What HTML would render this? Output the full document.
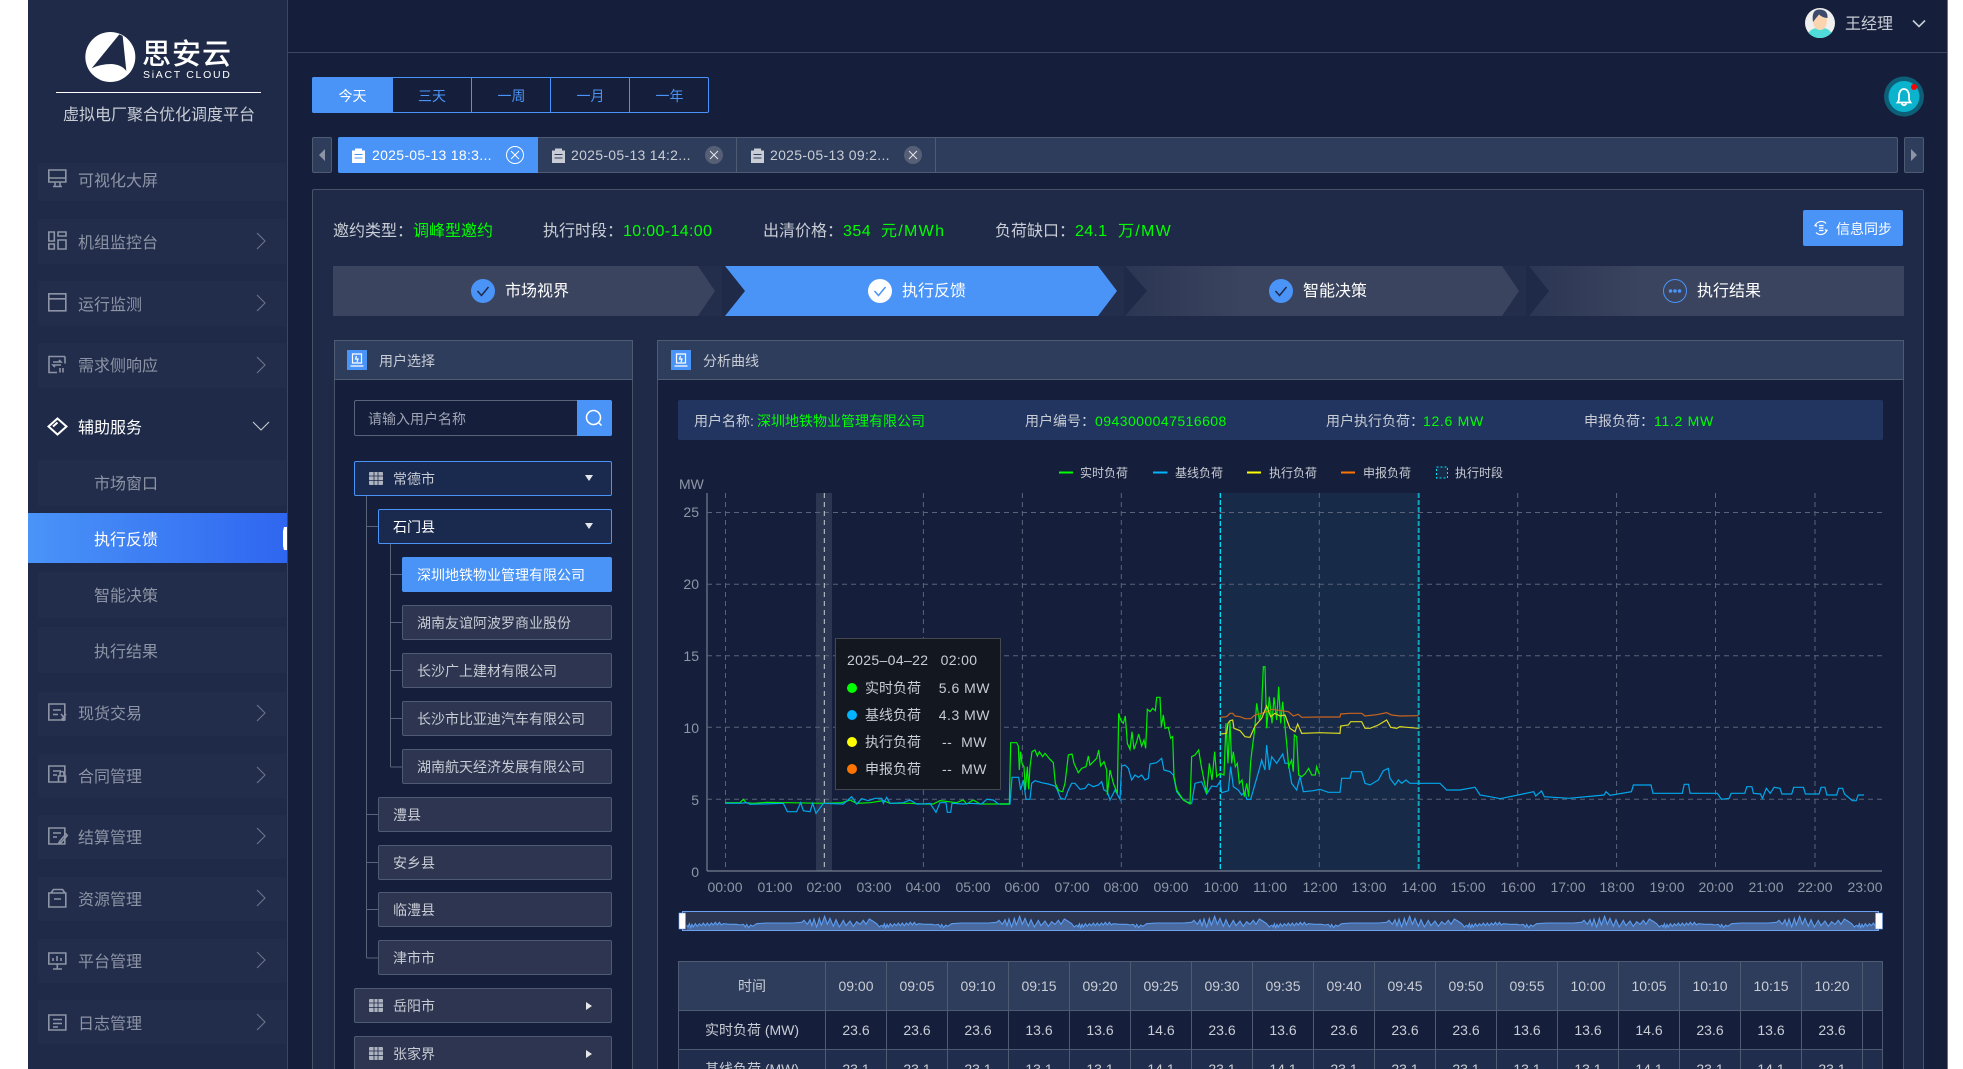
<!DOCTYPE html>
<html lang="zh-CN">
<head>
<meta charset="utf-8">
<title>虚拟电厂聚合优化调度平台</title>
<style>
html,body{margin:0;padding:0;background:#fff;width:1963px;height:1069px;overflow:hidden}
#p{position:relative;width:1963px;height:1069px;overflow:hidden;font-family:"Liberation Sans","Noto Sans CJK SC",sans-serif;font-size:14px;color:#c8ccd4}
.b{position:absolute;box-sizing:border-box}
.t{position:absolute;white-space:nowrap;line-height:20px;height:20px}
.m{font-size:16px;color:#8d94a5;margin-top:2px}
.g{color:#00ff00}
.w{color:#fff}
.mb{position:absolute;left:38px;width:248px;height:45px;background:#222d4b}
.tr{position:absolute;box-sizing:border-box;height:35px;border:1px solid #4f5a73;background:#2d3550;border-radius:2px;line-height:34px;white-space:nowrap;color:#c8ccd4;font-size:14px}
.on{background:#1a2a4f;border-color:#4a94f8}
.tb{position:absolute;top:77px;height:36px;line-height:38px;text-align:center;color:#4a94f8;font-size:14px}
.ax{position:absolute;top:877px;width:50px;margin-left:-25px;text-align:center;line-height:20px;color:#8f96a6;font-size:14px}
.yl{position:absolute;left:670px;width:29px;text-align:right;line-height:20px;color:#8f96a6;font-size:14px}
.lg{position:absolute;top:464px;line-height:18px;font-size:12px;color:#c8ccd4;white-space:nowrap}
table{position:absolute;left:678px;top:961px;border-collapse:collapse;table-layout:fixed;width:1204px;color:#c8ccd4;font-size:14px;text-align:center}
td{border:1px solid #4f5a73;padding:0;white-space:nowrap}
tr.h td{background:#2e3d5c;height:48px}
tr.r1 td{background:#151f3b;height:38px}
tr.r2 td{background:#212d4c;height:38px}
</style>
</head>
<body>
<div id="p">
<!-- Main backgrounds -->
<div class="b" style="left:28px;top:0;width:1920px;height:1069px;background:#151f3b"></div>
<div class="b" style="left:28px;top:0;width:260px;height:1069px;background:#1e2a47;border-right:1px solid #3d4660"></div>
<div class="b" style="left:288px;top:52px;width:1660px;height:1px;background:#3e465f"></div>
<div class="b" style="left:1947px;top:0;width:1px;height:1069px;background:#6c7284"></div>

<!-- Menu boxes -->
<div class="mb" style="top:163px;height:38px"></div>
<div class="mb" style="top:219px"></div>
<div class="mb" style="top:281px"></div>
<div class="mb" style="top:343px"></div>
<div class="mb" style="top:460px;height:46px"></div>
<div class="b" style="left:28px;top:513px;width:259px;height:50px;background:linear-gradient(90deg,#4a94f8,#2f66f0)"></div>
<div class="mb" style="top:572px;height:46px"></div>
<div class="mb" style="top:627px;height:46px"></div>
<div class="mb" style="top:692px;height:44px"></div>
<div class="mb" style="top:754px;height:44px"></div>
<div class="mb" style="top:815px;height:44px"></div>
<div class="mb" style="top:877px;height:44px"></div>
<div class="mb" style="top:939px;height:44px"></div>
<div class="mb" style="top:1000px;height:44px"></div>

<!-- Content panel -->
<div class="b" style="left:312px;top:189px;width:1612px;height:900px;background:#1e2a47;border:1px solid #4a5268;border-radius:2px"></div>
<div class="b" style="left:334px;top:340px;width:299px;height:760px;background:#151f3b;border:1px solid #4a5268"></div>
<div class="b" style="left:334px;top:340px;width:299px;height:40px;background:#2e3d5c;border:1px solid #4f5a73"></div>
<div class="b" style="left:657px;top:340px;width:1247px;height:760px;background:#151f3b;border:1px solid #4a5268"></div>
<div class="b" style="left:657px;top:340px;width:1247px;height:40px;background:#2e3d5c;border:1px solid #4f5a73"></div>
<div class="b" style="left:678px;top:400px;width:1205px;height:40px;background:#213560;border-radius:2px"></div>

<!-- Time tabs -->
<div class="b" style="left:312px;top:77px;width:397px;height:36px;border:1px solid #4a94f8;border-radius:2px"></div>
<div class="tb" style="left:312px;width:81px;background:#4a94f8;color:#fff;border-radius:2px 0 0 2px">今天</div>
<div class="tb" style="left:393px;width:78px">三天</div>
<div class="tb" style="left:471px;width:79px;border-left:1px solid #4a94f8">一周</div>
<div class="tb" style="left:550px;width:79px;border-left:1px solid #4a94f8">一月</div>
<div class="tb" style="left:629px;width:79px;border-left:1px solid #4a94f8">一年</div>

<!-- Tabs bar -->
<div class="b" style="left:312px;top:137px;width:20px;height:36px;background:#2e3d5c;border:1px solid #4f5a73;border-radius:2px"></div>
<div class="b" style="left:338px;top:137px;width:1560px;height:36px;background:#2e3d5c;border:1px solid #4f5a73;border-radius:2px"></div>
<div class="b" style="left:338px;top:137px;width:200px;height:36px;background:#4a94f8;border-radius:2px 0 0 2px"></div>
<div class="b" style="left:736px;top:137px;width:1px;height:36px;background:#4f5a73"></div>
<div class="b" style="left:935px;top:137px;width:1px;height:36px;background:#4f5a73"></div>
<div class="b" style="left:1904px;top:137px;width:20px;height:36px;background:#2e3d5c;border:1px solid #4f5a73;border-radius:2px"></div>

<!-- Buttons -->
<div class="b" style="left:1803px;top:210px;width:100px;height:36px;background:#4a94f8;border-radius:2px"></div>

<!-- Tree -->
<div class="b" style="left:354px;top:400px;width:258px;height:36px;background:#151f3b;border:1px solid #5a6379;border-radius:2px"></div>
<div class="b" style="left:577px;top:400px;width:35px;height:36px;background:#4a94f8;border-radius:0 2px 2px 0"></div>

<div class="tr on" style="left:354px;top:461px;width:258px;padding-left:38px">常德市</div>
<div class="tr on" style="left:378px;top:509px;width:234px;padding-left:14px;color:#fff">石门县</div>
<div class="tr" style="left:402px;top:557px;width:210px;padding-left:14px;background:#4a94f8;border-color:#4a94f8;color:#fff">深圳地铁物业管理有限公司</div>
<div class="tr" style="left:402px;top:605px;width:210px;padding-left:14px">湖南友谊阿波罗商业股份</div>
<div class="tr" style="left:402px;top:653px;width:210px;padding-left:14px">长沙广上建材有限公司</div>
<div class="tr" style="left:402px;top:701px;width:210px;padding-left:14px">长沙市比亚迪汽车有限公司</div>
<div class="tr" style="left:402px;top:749px;width:210px;padding-left:14px">湖南航天经济发展有限公司</div>
<div class="tr" style="left:378px;top:797px;width:234px;padding-left:14px">澧县</div>
<div class="tr" style="left:378px;top:845px;width:234px;padding-left:14px">安乡县</div>
<div class="tr" style="left:378px;top:892px;width:234px;padding-left:14px">临澧县</div>
<div class="tr" style="left:378px;top:940px;width:234px;padding-left:14px">津市市</div>
<div class="tr" style="left:354px;top:988px;width:258px;padding-left:38px">岳阳市</div>
<div class="tr" style="left:354px;top:1036px;width:258px;padding-left:38px">张家界</div>

<!-- All vector graphics -->
<svg class="b" style="left:0;top:0" width="1963" height="1069" viewBox="0 0 1963 1069" fill="none">
<defs>
<linearGradient id="sg" x1="0" x2="1" y1="0" y2="0"><stop offset="0" stop-color="#2b3654"/><stop offset=".3" stop-color="#3a445e"/><stop offset="1" stop-color="#3a445e"/></linearGradient>
<clipPath id="mc"><rect x="683" y="911" width="1195" height="20"/></clipPath>
<g id="wv" transform="translate(680,905) scale(.33333)">
<polygon fill="#4a6a9f" points="20,76 20,60 24,66 28,56 32,68 36,58 40,66 46,56 52,64 58,56 64,62 70,54 76,62 82,54 88,62 94,54 100,60 106,52 112,60 118,52 124,60 130,56 150,58 170,58 180,60 190,58 196,66 200,58 206,68 212,60 218,64 230,56 260,54 300,54 340,54 365,52 372,46 382,58 390,44 396,62 402,42 410,66 418,40 424,60 434,34 442,58 450,40 460,64 468,44 478,66 490,46 498,62 510,48 520,64 530,50 540,58 550,46 558,58 568,42 578,48 590,56 598,66 605,60 605,76"/>
<polyline stroke="#5b9cf0" stroke-width="1.100" vector-effect="non-scaling-stroke" points="20,60 24,66 28,56 32,68 36,58 40,66 46,56 52,64 58,56 64,62 70,54 76,62 82,54 88,62 94,54 100,60 106,52 112,60 118,52 124,60 130,56 150,58 170,58 180,60 190,58 196,66 200,58 206,68 212,60 218,64 230,56 260,54 300,54 340,54 365,52 372,46 382,58 390,44 396,62 402,42 410,66 418,40 424,60 434,34 442,58 450,40 460,64 468,44 478,66 490,46 498,62 510,48 520,64 530,50 540,58 550,46 558,58 568,42 578,48 590,56 598,66 605,60"/>
</g>
</defs>

<!-- Logo -->
<g transform="scale(.33333)">
<circle cx="331" cy="171" r="75" fill="#fff"/>
<path d="M358 103L275 205Q300 192 335 192Q365 194 379 213L368 108Z" fill="#1e2a47"/>
</g>
<rect x="56" y="92" width="205" height="1" fill="#fff"/>

<!-- Sidebar icons -->
<g stroke="#8d94a5" stroke-width="1.600">
<path d="M48.800 170h17v12h-17zM48.800 178h17M53 186.500h9M55 182v4.500M60 182v4.500"/>
<path d="M48.800 232h5.500v9h-5.500zM48.800 244h5.500v5h-5.500zM58 232h8v4h-8zM58 240h8v9h-8z"/>
<path d="M48.800 293.800h17v17h-17zM48.800 298.800h17"/>
<path d="M65 356.500H49v16h8M65 356.500v7M53 362h8l-2-2M61 365h-8l2 2M60 368v4.500M63 368v4.500"/>
<path d="M48.800 704h16v16h-16zM53 710h8M53 714.500h5M61 714l2.500 3 2.500-3M63.500 717v4M61.500 718.500h4"/>
<path d="M48.800 766h16v16h-16zM53 771h8M53 775h4M58.500 776h7v6h-7zM60 776v-2.500a2 2 0 0 1 4 0V776"/>
<path d="M48.800 828h16v16h-16zM53 833h8M53 837h4M66 834l-6 7-1.500 2.500 2.800-1 6-7z"/>
<path d="M48.800 893h17v14h-17zM51 893l2.500-3.500h9l2.500 3.500M54 899h7"/>
<path d="M48.800 953h17v11h-17zM57.300 964v5M53 969h9M53 961v-3M57 961v-5M61 961v-3"/>
<path d="M48.800 1015h17v15h-17zM53 1019.500h9M53 1023.500h9M53 1027h5"/>
</g>
<path d="M57.500 418.500L66.500 426.500L57.500 434.500L48.500 426.500zM53 426.500L57.500 422.500" stroke="#fff" stroke-width="2"/>

<!-- Chevrons -->
<g stroke="#6c748a" stroke-width="1.100">
<path d="M257 233l8 8-8 8M257 295l8 8-8 8M257 357l8 8-8 8M257 705l8 8-8 8M257 767l8 8-8 8M257 828l8 8-8 8M257 890l8 8-8 8M257 952l8 8-8 8M257 1014l8 8-8 8"/>
</g>
<path d="M253 422l8 8 8-8" stroke="#c8ccd4" stroke-width="1.100"/>
<path d="M287 527h-3l-1 4v15l1 4h3z" fill="#fff"/>

<!-- Avatar / user -->
<circle cx="1820" cy="23" r="15" fill="#efefef"/>
<path d="M1808.500 33Q1811 28.500 1817 28h6Q1829 28.500 1831.500 33Q1826 38 1820 38Q1813 38 1808.500 33Z" fill="#4fdcd8"/>
<ellipse cx="1820" cy="21" rx="7" ry="9" fill="#fbd5b0"/>
<path d="M1813 22Q1811 9 1820 9.500Q1828 10 1827.500 18Q1823 18 1819 14.500Q1816 18 1813 22Z" fill="#3d4a6b"/>
<path d="M1913 20.500l6 6 6-6" stroke="#c8ccd4" stroke-width="1.600"/>

<!-- Bell -->
<circle cx="1904" cy="96.500" r="20" fill="#0d5f78"/>
<circle cx="1904" cy="96.500" r="15.500" fill="#0bb3cd"/>
<path d="M1897.500 102.500c1.500-2 1.500-3 1.500-6.500 0-4 2-7 5-7s5 3 5 7c0 3.500 0 4.500 1.500 6.500zM1901.500 103.500q2.500 3.500 5 0" stroke="#fff" stroke-width="1.800"/>
<circle cx="1914" cy="87" r="3" fill="#ff0000"/>

<!-- Tabs bar arrows / icons -->
<path d="M325 149v12l-6-6zM1911 149v12l6-6z" fill="#8d94a5"/>
<g>
<path d="M352 150.500h13v12.500h-13zM355 148.500h7v3h-7z" fill="#fff"/>
<path d="M354.500 154.500h8M354.500 158h8" stroke="#4a94f8"/>
<path d="M552 150.500h13v12.500h-13zM555 148.500h7v3h-7z" fill="#c8ccd4"/>
<path d="M554.500 154.500h8M554.500 158h8" stroke="#2e3d5c"/>
<path d="M751 150.500h13v12.500h-13zM754 148.500h7v3h-7z" fill="#c8ccd4"/>
<path d="M753.500 154.500h8M753.500 158h8" stroke="#2e3d5c"/>
</g>
<circle cx="515" cy="155" r="8.500" stroke="#fff"/>
<path d="M511 151l8 8M519 151l-8 8" stroke="#fff"/>
<circle cx="714" cy="155" r="9" fill="#565f75"/>
<path d="M710 151l8 8M718 151l-8 8" stroke="#e4e6ea"/>
<circle cx="913" cy="155" r="9" fill="#565f75"/>
<path d="M909 151l8 8M917 151l-8 8" stroke="#e4e6ea"/>

<!-- Sync icon -->
<path d="M1815.500 225a6.500 6.500 0 0 1 10.500-1.500M1826.500 231a6.500 6.500 0 0 1-10.500 1.500M1819 225.500h4.500M1819 228h4.500M1819 230.500h4.500" stroke="#fff" stroke-width="1.200"/>
<path d="M1814 226l3.500 1-1.800-3.500zM1828 230l-3.500-1 1.800 3.500z" fill="#fff"/>

<!-- Steps -->
<rect x="696" y="266" width="26" height="50" fill="#232e4d"/>
<rect x="1098" y="266" width="26" height="50" fill="#232e4d"/>
<rect x="1500" y="266" width="26" height="50" fill="#232e4d"/>
<polygon points="333,266 698,266 715,291 698,316 333,316" fill="#3a445e"/>
<polygon points="725,266 1098,266 1117,291 1098,316 725,316 745,291" fill="#4a94f8"/>
<polygon points="1125,266 1502,266 1519,291 1502,316 1125,316 1147,291" fill="url(#sg)"/>
<polygon points="1529,266 1904,266 1904,316 1529,316 1549,291" fill="url(#sg)"/>
<circle cx="483" cy="291" r="12" fill="#4a94f8"/>
<path d="M477.500 291l4 4.500 7-8.500" stroke="#1e2a47" stroke-width="1.500"/>
<circle cx="880" cy="291" r="12" fill="#fff"/>
<path d="M874.500 291l4 4.500 7-8.500" stroke="#4a94f8" stroke-width="1.500"/>
<circle cx="1281" cy="291" r="12" fill="#4a94f8"/>
<path d="M1275.500 291l4 4.500 7-8.500" stroke="#1e2a47" stroke-width="1.500"/>
<circle cx="1675" cy="291" r="11.500" stroke="#4a94f8"/>
<circle cx="1670.500" cy="291" r="1.800" fill="#4a94f8"/><circle cx="1675" cy="291" r="1.800" fill="#4a94f8"/><circle cx="1679.500" cy="291" r="1.800" fill="#4a94f8"/>

<!-- Panel head icons -->
<rect x="347" y="350" width="20" height="20" fill="#4a94f8"/>
<path d="M352.500 354h9v9h-9zM350.500 366h13M356.500 356l-1 3h2.500l-1 3" stroke="#fff" stroke-width="1.200"/>
<rect x="671" y="350" width="20" height="20" fill="#4a94f8"/>
<path d="M676.500 354h9v9h-9zM674.500 366h13M680.500 356l-1 3h2.500l-1 3" stroke="#fff" stroke-width="1.200"/>

<!-- Search -->
<circle cx="593.500" cy="417.500" r="7" stroke="#fff" stroke-width="1.500"/>
<path d="M598.500 422.500l3 3" stroke="#fff" stroke-width="1.500"/>

<!-- Tree connectors -->
<path d="M366.500 496V958M366.500 526.500H378M366.500 814.500H378M366.500 862.500H378M366.500 909.500H378M366.500 958H378M390.500 544V767M390.500 574.500H402M390.500 622.500H402M390.500 670.500H402M390.500 718.500H402M390.500 767H402" stroke="#5a6379"/>
<!-- Tree carets -->
<path d="M585 475h8l-4 6zM585 523h8l-4 6z" fill="#e4e6ea"/>
<path d="M586 1002v8l6-4zM586 1050v8l6-4z" fill="#e4e6ea"/>
<!-- Tree icons -->
<g fill="#aeb3c0">
<rect x="369" y="472" width="14" height="13" rx="1"/><rect x="369" y="999" width="14" height="13" rx="1"/><rect x="369" y="1047" width="14" height="13" rx="1"/>
</g>
<path d="M369 476h14M369 480.500h14M374 472v13M378 472v13M369 1003h14M369 1007.500h14M374 999v13M378 999v13M369 1051h14M369 1055.500h14M374 1047v13M378 1047v13" stroke="#1e2a47" stroke-width=".8"/>

<!-- Chart -->
<rect x="1220.300" y="493" width="198.400" height="378" fill="#172b48"/>
<rect x="816" y="493" width="16" height="378" fill="#2c3650"/>
<g stroke="#5a6379" stroke-dasharray="5 4">
<path d="M707 512.500H1882M707 584.300H1882M707 655.700H1882M707 727.300H1882M707 799.300H1882"/>
<path d="M725.500 493V871M923.400 493V871M1022.400 493V871M1121.300 493V871M1319.300 493V871M1517.700 493V871M1616.600 493V871M1715.500 493V871M1815 493V871"/>
</g>
<path d="M824.300 493V871" stroke="#c8ccd4" stroke-dasharray="5 4"/>
<path d="M1220.300 493V871" stroke="#00e5ff" stroke-width="1.300" stroke-dasharray="5 2"/>
<path d="M1418.700 493V871" stroke="#0aa5b8" stroke-width="2" stroke-dasharray="5 2"/>
<path d="M707 493V871" stroke="#5e667c" stroke-width="1.600"/>
<path d="M707 871H1882" stroke="#8f96a6"/>

<g transform="translate(710,780) scale(.33333)" fill="none">
<polyline stroke="#00ee00" stroke-width="1.200" vector-effect="non-scaling-stroke" points="45,68 90,68 100,58 108,68 130,70 170,67 340,70 395,68 420,60 440,70 480,68 520,62 540,70 600,70 640,72 670,72 690,62 740,68 760,60 770,72 790,60 810,72 850,72 895,72"/>
<polyline stroke="#00a7ec" stroke-width="1.200" vector-effect="non-scaling-stroke" points="45,70 90,70 110,68 120,73 220,70 232,95 260,95 272,68 280,92 300,95 308,70 318,100 340,70 400,72 425,50 440,72 455,56 475,62 495,55 515,55 520,70 530,52 540,70 580,68 600,60 620,72 640,72 660,70 678,97 690,68 708,68 712,97 722,97 726,70 760,72 780,70 815,72 830,58 850,60 865,72 900,72"/>
</g>
<g transform="translate(1000,620) scale(.33333)" fill="none">
<polyline stroke="#00a7ec" stroke-width="1.200" vector-effect="non-scaling-stroke" points="0,552 30,552 36,472 56,472 62,510 70,480 78,538 90,538 95,490 105,482 125,488 145,492 165,498 172,510 182,535 195,538 205,510 215,490 225,490 240,508 255,505 265,492 280,500 295,495 305,485 312,510 322,515 330,540 345,510 360,538 365,438 375,435 385,445 395,480 405,465 415,472 425,465 435,480 445,475 450,432 470,428 485,415 492,450 510,455 520,465 530,515 545,535 560,545 575,550 585,490 605,485 620,522 635,498 650,500 660,485 665,518 685,512 692,440 700,500 715,510 725,525 735,515 740,538 752,538 760,510 770,475 780,440 785,420 795,450 800,375 808,450 815,410 830,430 848,402 855,430 865,430 875,490 890,510 900,470 910,515 940,512 960,508 985,517 1020,517 1025,475 1050,475 1055,455 1085,455 1095,490 1110,495 1135,480 1150,452 1165,445 1170,475 1185,495 1195,480 1205,490 1218,480 1230,490 1275,490 1320,490 1340,510 1380,510 1425,502 1440,525 1480,532 1500,536"/>
<polyline stroke="#00ee00" stroke-width="1.200" vector-effect="non-scaling-stroke" points="0,552 28,552 32,368 50,368 55,378 58,450 62,395 66,430 72,440 76,510 82,440 86,508 90,440 96,395 105,390 112,408 118,395 128,410 135,400 150,418 160,428 166,490 176,512 188,515 195,490 205,405 216,402 222,430 235,458 245,445 258,440 265,408 270,435 280,425 290,415 296,390 302,438 312,425 320,450 322,525 330,450 340,490 352,520 356,280 362,300 370,310 376,288 382,370 390,388 396,335 402,388 410,365 416,342 425,378 432,360 437,385 442,268 450,275 458,265 466,272 470,232 480,232 484,320 490,285 495,325 505,322 512,355 518,350 522,470 530,510 540,525 550,540 570,552 575,410 585,405 596,390 604,440 612,480 620,520 628,430 636,480 644,395 650,470 660,460 672,465 678,310 684,430 690,305 695,430 700,395 706,440 712,430 718,490 726,480 733,530 740,490 746,530 752,425 758,375 764,330 770,250 778,300 784,280 790,140 795,140 800,325 808,230 816,310 822,232 830,300 836,200 842,310 848,245 855,320 860,370 866,440 875,420 880,455 883,345 890,350 896,465 905,470 915,462 926,445 935,465 946,465 950,440 958,462"/>
<polyline stroke="#c8641e" stroke-width="1.200" vector-effect="non-scaling-stroke" points="661,292 680,290 690,280 698,280 705,288 720,290 735,296 752,296 765,285 785,280 800,275 815,268 845,272 865,275 880,288 895,283 905,292 960,291 1020,291 1022,282 1050,280 1085,280 1095,288 1130,284 1160,278 1175,285 1200,288 1256,287"/>
<polyline stroke="#d8d820" stroke-width="1.200" vector-effect="non-scaling-stroke" points="661,342 680,340 684,310 690,302 698,300 702,325 720,332 735,350 750,352 765,318 785,295 800,258 812,290 825,280 840,288 855,285 870,325 885,335 893,312 905,340 960,338 1020,340 1022,318 1045,315 1052,305 1085,305 1095,325 1110,325 1135,315 1160,300 1172,322 1190,325 1200,320 1220,322 1256,325"/>
</g>
<g transform="translate(1350,780) scale(.3909,.33333)" fill="none">
<polyline stroke="#00a7ec" stroke-width="1.200" vector-effect="non-scaling-stroke" points="384,56 430,45 470,35 475,48 490,33 497,50 560,55 650,45 655,35 665,46 720,35 725,15 770,15 775,40 850,40 855,13 866,13 870,40 940,40 950,58 970,55 975,40 1010,40 1015,20 1028,20 1032,40 1050,42 1055,55 1065,25 1075,40 1085,22 1100,25 1105,42 1130,42 1135,22 1160,22 1165,42 1200,42 1205,22 1215,22 1220,45 1245,45 1250,25 1260,25 1265,42 1285,62 1295,62 1300,45 1315,45"/>
</g>

<!-- Legend -->
<g stroke-width="2">
<path d="M1059 472.500h14" stroke="#00ff00"/>
<path d="M1153 472.500h14.500" stroke="#00b4ff"/>
<path d="M1247 472.500h14" stroke="#ffff00"/>
<path d="M1341 472.500h14" stroke="#ff7300"/>
</g>
<rect x="1436.500" y="467" width="11" height="11" fill="#172b48" stroke="#00e5ff" stroke-dasharray="2 2"/>

<!-- Minimap -->
<rect x="682.500" y="911.500" width="1196" height="19" fill="#2c3650"/>
<g clip-path="url(#mc)">
<use href="#wv"/><use href="#wv" x="195"/><use href="#wv" x="390"/><use href="#wv" x="585"/><use href="#wv" x="780"/><use href="#wv" x="975"/><use href="#wv" x="1170"/>
</g>
<rect x="682.500" y="911.500" width="1196" height="19" stroke="#6ea0f0"/>
<rect x="679" y="913" width="6.500" height="16" fill="#fff" stroke="#6ea0f0" stroke-width=".6"/>
<rect x="1875.500" y="913" width="7" height="16" fill="#fff" stroke="#6ea0f0" stroke-width=".6"/>
</svg>

<!-- Sidebar text -->
<div class="t w" style="left:142px;top:39px;font-size:29px;line-height:32px;height:32px;letter-spacing:1px;font-weight:500">思安云</div>
<div class="t w" style="left:143px;top:70px;font-size:10.500px;line-height:11px;height:11px;letter-spacing:1.700px">SiACT CLOUD</div>
<div class="t" style="left:63px;top:106px;font-size:16px">虚拟电厂聚合优化调度平台</div>
<div class="t m" style="left:78px;top:170px">可视化大屏</div>
<div class="t m" style="left:78px;top:232px">机组监控台</div>
<div class="t m" style="left:78px;top:294px">运行监测</div>
<div class="t m" style="left:78px;top:355px">需求侧响应</div>
<div class="t m w" style="left:78px;top:417px;color:#fff">辅助服务</div>
<div class="t m" style="left:94px;top:473px">市场窗口</div>
<div class="t m" style="left:94px;top:529px;color:#fff">执行反馈</div>
<div class="t m" style="left:94px;top:585px">智能决策</div>
<div class="t m" style="left:94px;top:641px">执行结果</div>
<div class="t m" style="left:78px;top:703px">现货交易</div>
<div class="t m" style="left:78px;top:766px">合同管理</div>
<div class="t m" style="left:78px;top:827px">结算管理</div>
<div class="t m" style="left:78px;top:889px">资源管理</div>
<div class="t m" style="left:78px;top:951px">平台管理</div>
<div class="t m" style="left:78px;top:1013px">日志管理</div>

<!-- Header -->
<div class="t" style="left:1845px;top:15px;font-size:16px">王经理</div>

<!-- Tabs text -->
<div class="t w" style="left:372px;top:145px;letter-spacing:.3px">2025-05-13 18:3...</div>
<div class="t" style="left:571px;top:145px;letter-spacing:.3px">2025-05-13 14:2...</div>
<div class="t" style="left:770px;top:145px;letter-spacing:.3px">2025-05-13 09:2...</div>
<div class="t w" style="left:1836px;top:219px">信息同步</div>

<!-- Info row -->
<div class="t" style="left:333px;top:222px;font-size:16px">邀约类型：</div>
<div class="t g" style="left:413px;top:222px;font-size:16px">调峰型邀约</div>
<div class="t" style="left:543px;top:222px;font-size:16px">执行时段：</div>
<div class="t g" style="left:623px;top:222px;font-size:16px;letter-spacing:.35px">10:00-14:00</div>
<div class="t" style="left:763px;top:222px;font-size:16px">出清价格：</div>
<div class="t g" style="left:843px;top:222px;font-size:16px;letter-spacing:.5px">354</div>
<div class="t g" style="left:881px;top:222px;font-size:16px;letter-spacing:1.300px">元/MWh</div>
<div class="t" style="left:995px;top:222px;font-size:16px">负荷缺口：</div>
<div class="t g" style="left:1075px;top:222px;font-size:16px;letter-spacing:.3px">24.1</div>
<div class="t g" style="left:1118px;top:222px;font-size:16px;letter-spacing:1.300px">万/MW</div>

<!-- Steps text -->
<div class="t w" style="left:505px;top:282px;font-size:16px">市场视界</div>
<div class="t w" style="left:902px;top:282px;font-size:16px">执行反馈</div>
<div class="t w" style="left:1303px;top:282px;font-size:16px">智能决策</div>
<div class="t w" style="left:1697px;top:282px;font-size:16px">执行结果</div>

<!-- Panels heads -->
<div class="t" style="left:379px;top:351px">用户选择</div>
<div class="t" style="left:703px;top:351px">分析曲线</div>
<div class="t" style="left:368px;top:409px;color:#9ea4b3">请输入用户名称</div>

<!-- User info bar -->
<div class="t" style="left:694px;top:411px">用户名称:</div>
<div class="t g" style="left:757px;top:411px">深圳地铁物业管理有限公司</div>
<div class="t" style="left:1025px;top:411px">用户编号：</div>
<div class="t g" style="left:1095px;top:411px;letter-spacing:.45px">0943000047516608</div>
<div class="t" style="left:1326px;top:411px">用户执行负荷：</div>
<div class="t g" style="left:1423px;top:411px;letter-spacing:.7px">12.6 MW</div>
<div class="t" style="left:1584px;top:411px">申报负荷：</div>
<div class="t g" style="left:1654px;top:411px;letter-spacing:.7px">11.2 MW</div>

<!-- Legend text -->
<div class="lg" style="left:1080px">实时负荷</div>
<div class="lg" style="left:1175px">基线负荷</div>
<div class="lg" style="left:1269px">执行负荷</div>
<div class="lg" style="left:1363px">申报负荷</div>
<div class="lg" style="left:1455px">执行时段</div>

<!-- Y labels -->
<div class="t" style="left:679px;top:474px;color:#8f96a6">MW</div>
<div class="yl" style="top:502px">25</div>
<div class="yl" style="top:574px">20</div>
<div class="yl" style="top:646px">15</div>
<div class="yl" style="top:718px">10</div>
<div class="yl" style="top:790px">5</div>
<div class="yl" style="top:862px">0</div>

<!-- X labels -->
<div class="ax" style="left:725px">00:00</div><div class="ax" style="left:775px">01:00</div><div class="ax" style="left:824px">02:00</div><div class="ax" style="left:874px">03:00</div><div class="ax" style="left:923px">04:00</div><div class="ax" style="left:973px">05:00</div><div class="ax" style="left:1022px">06:00</div><div class="ax" style="left:1072px">07:00</div><div class="ax" style="left:1121px">08:00</div><div class="ax" style="left:1171px">09:00</div><div class="ax" style="left:1221px">10:00</div><div class="ax" style="left:1270px">11:00</div><div class="ax" style="left:1320px">12:00</div><div class="ax" style="left:1369px">13:00</div><div class="ax" style="left:1419px">14:00</div><div class="ax" style="left:1468px">15:00</div><div class="ax" style="left:1518px">16:00</div><div class="ax" style="left:1568px">17:00</div><div class="ax" style="left:1617px">18:00</div><div class="ax" style="left:1667px">19:00</div><div class="ax" style="left:1716px">20:00</div><div class="ax" style="left:1766px">21:00</div><div class="ax" style="left:1815px">22:00</div><div class="ax" style="left:1865px">23:00</div>

<!-- Tooltip -->
<div class="b" style="left:835px;top:638px;width:166px;height:152px;background:rgba(20,23,30,.97);border:1px solid #45484f"></div>
<div class="t" style="left:847px;top:650px;letter-spacing:.35px;word-spacing:8px">2025–04–22 02:00</div>
<div class="b" style="left:847px;top:683px;width:10px;height:10px;border-radius:50%;background:#00ff00"></div>
<div class="b" style="left:847px;top:710px;width:10px;height:10px;border-radius:50%;background:#00b4ff"></div>
<div class="b" style="left:847px;top:737px;width:10px;height:10px;border-radius:50%;background:#ffff00"></div>
<div class="b" style="left:847px;top:764px;width:10px;height:10px;border-radius:50%;background:#ff7300"></div>
<div class="t" style="left:865px;top:678px">实时负荷</div><div class="t" style="left:920px;width:70px;text-align:right;top:678px;letter-spacing:.5px">5.6 MW</div>
<div class="t" style="left:865px;top:705px">基线负荷</div><div class="t" style="left:920px;width:70px;text-align:right;top:705px;letter-spacing:.5px">4.3 MW</div>
<div class="t" style="left:920px;width:67px;text-align:right;top:732px;letter-spacing:.5px">-- &nbsp;MW</div><div class="t" style="left:865px;top:732px">执行负荷</div>
<div class="t" style="left:920px;width:67px;text-align:right;top:759px;letter-spacing:.5px">-- &nbsp;MW</div><div class="t" style="left:865px;top:759px">申报负荷</div>

<!-- Table -->
<table>
<colgroup><col style="width:147px"><col span="17" style="width:61px"><col style="width:20px"></colgroup>
<tr class="h"><td>时间</td><td>09:00</td><td>09:05</td><td>09:10</td><td>09:15</td><td>09:20</td><td>09:25</td><td>09:30</td><td>09:35</td><td>09:40</td><td>09:45</td><td>09:50</td><td>09:55</td><td>10:00</td><td>10:05</td><td>10:10</td><td>10:15</td><td>10:20</td><td></td></tr>
<tr class="r1"><td>实时负荷 (MW)</td><td>23.6</td><td>23.6</td><td>23.6</td><td>13.6</td><td>13.6</td><td>14.6</td><td>23.6</td><td>13.6</td><td>23.6</td><td>23.6</td><td>23.6</td><td>13.6</td><td>13.6</td><td>14.6</td><td>23.6</td><td>13.6</td><td>23.6</td><td></td></tr>
<tr class="r2"><td>基线负荷 (MW)</td><td>23.1</td><td>23.1</td><td>23.1</td><td>13.1</td><td>13.1</td><td>14.1</td><td>23.1</td><td>14.1</td><td>23.1</td><td>23.1</td><td>23.1</td><td>13.1</td><td>13.1</td><td>14.1</td><td>23.1</td><td>14.1</td><td>23.1</td><td></td></tr>
</table>
</div>
</body>
</html>
